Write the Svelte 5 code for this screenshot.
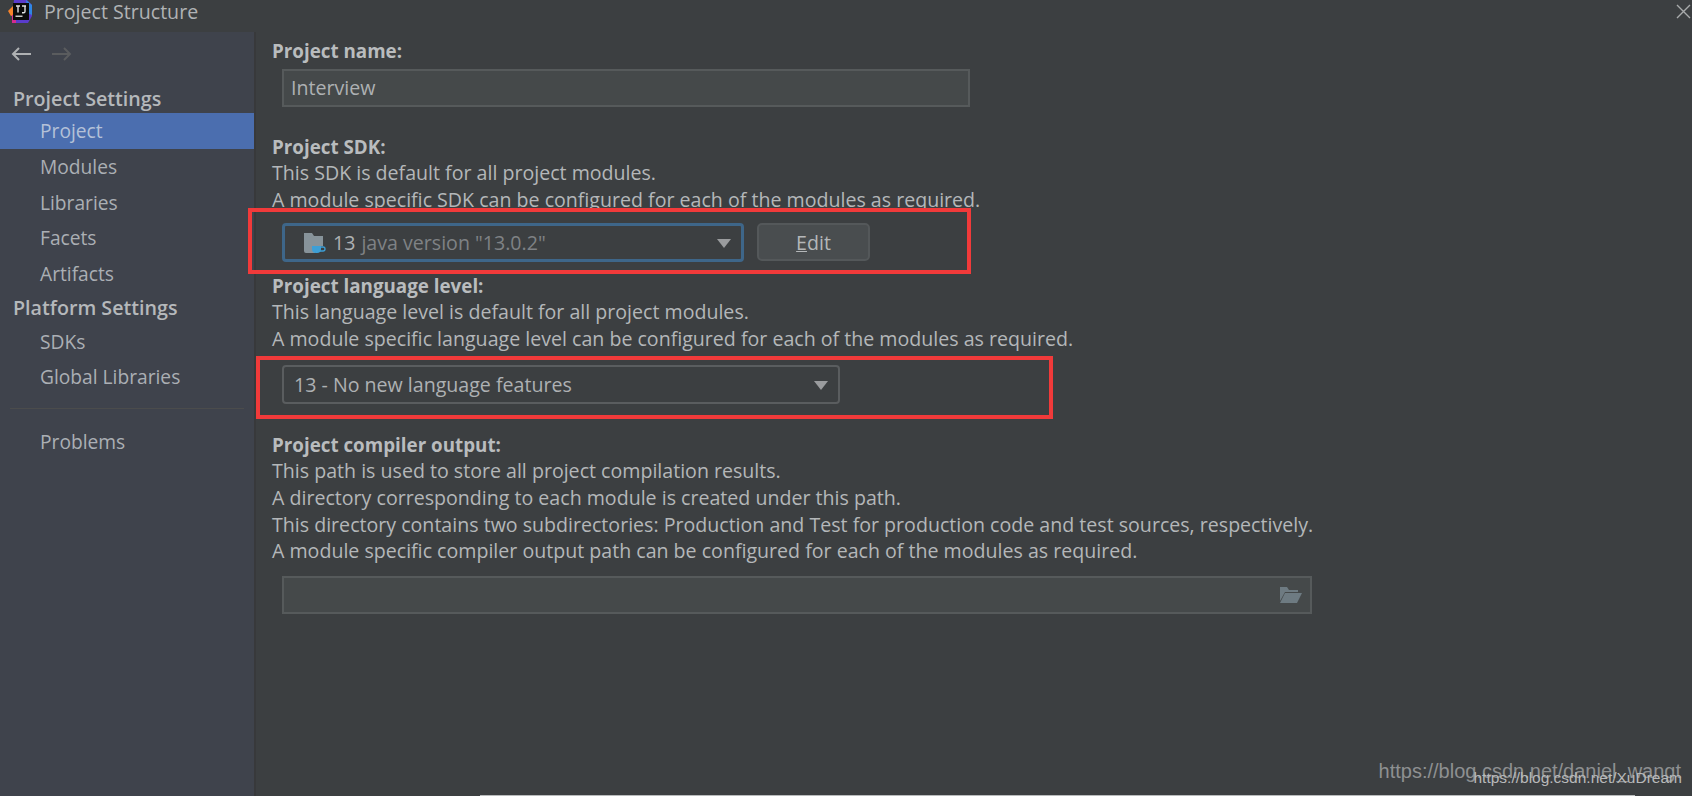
<script lang="ts">
  const nav = [
    { label: 'Project Settings', head: true },
    { label: 'Project', active: true },
    { label: 'Modules' },
    { label: 'Libraries' },
    { label: 'Facets' },
    { label: 'Artifacts' },
    { label: 'Platform Settings', head: true },
    { label: 'SDKs' },
    { label: 'Global Libraries' }
  ];
</script>

<div class="window">
  <header class="titlebar">
    <svg class="logo" width="26" height="24" viewBox="0 0 26 24">
      <path d="M7 0h13l5 5v11l-4 7H8l-3-6z" fill="#5a3ccb" />
      <path d="M1 11l5-5 2 9-4 1z" fill="#f7842b" />
      <path d="M5 15l4-1v9H5z" fill="#d42c8e" />
      <path d="M19 0l6 5v10l-4-2z" fill="#2f86e4" />
      <rect x="6" y="3" width="16" height="17" fill="#0b0b0b" />
      <rect x="8.5" y="15.5" width="7" height="1.5" fill="#c8c8c8" />
      <path d="M9 6h4M11 6v6.5M15 6h4M18 6v5.5q0 1.3-1.4 1.3H15" stroke="#e2e2e2" stroke-width="1.4" fill="none" />
    </svg>
    <span class="title">Project Structure</span>
    <svg class="close" width="15" height="15" viewBox="0 0 15 15">
      <path d="M1 1l13 13M14 1L1 14" stroke="#a9abac" stroke-width="1.4" />
    </svg>
  </header>

  <div class="body">
    <aside class="sidebar">
      <div class="history">
        <svg width="22" height="16" viewBox="0 0 22 16">
          <path d="M21 8H3M9 2L3 8l6 6" stroke="#afb1b3" stroke-width="2" fill="none" />
        </svg>
        <svg width="22" height="16" viewBox="0 0 22 16">
          <path d="M1 8h18M13 2l6 6-6 6" stroke="#5a5c5e" stroke-width="2" fill="none" />
        </svg>
      </div>
      <nav>
        {#each nav as item}
          <div class="nav-item" class:head={item.head} class:active={item.active}>{item.label}</div>
        {/each}
      </nav>
      <div class="divider"></div>
      <div class="nav-item">Problems</div>
    </aside>

    <main class="content">
      <section class="name-block">
        <h2>Project name:</h2>
        <div class="field name-field">Interview</div>
      </section>

      <section class="sdk-block">
        <h2>Project SDK:</h2>
        <p>This SDK is default for all project modules.</p>
        <p>A module specific SDK can be configured for each of the modules as required.</p>
        <div class="sdk-row">
          <div class="combo sdk-combo">
            <svg width="24" height="24" viewBox="0 0 24 24">
              <path d="M1 2h8l2 3h9v10H12v7H3q-2 0-2-2z" fill="#87939a" />
              <path d="M9 15h9v3q0 4-4 4h-1q-4 0-4-4z" fill="#3d9fd6" />
              <path d="M18 16h2q2 0 2 2t-2 2h-3" stroke="#3d9fd6" stroke-width="1.3" fill="none" />
            </svg>
            <span class="sdk-num">13</span>
            <span class="sdk-version">java version "13.0.2"</span>
            <span class="caret"></span>
          </div>
          <div class="edit"><u>E</u>dit</div>
        </div>
      </section>

      <section class="level-block">
        <h2>Project language level:</h2>
        <p>This language level is default for all project modules.</p>
        <p>A module specific language level can be configured for each of the modules as required.</p>
        <div class="combo level-combo">
          <span>13 - No new language features</span>
          <span class="caret"></span>
        </div>
      </section>

      <section class="output-block">
        <h2>Project compiler output:</h2>
        <p>This path is used to store all project compilation results.</p>
        <p>A directory corresponding to each module is created under this path.</p>
        <p>This directory contains two subdirectories: Production and Test for production code and test sources, respectively.</p>
        <p>A module specific compiler output path can be configured for each of the modules as required.</p>
        <div class="field output-field">
          <svg width="24" height="18" viewBox="0 0 24 18">
            <path d="M1 1h7l2 3h9v2H6L1 15z" fill="#6e7b82" />
            <path d="M6 7h17l-5 10H1z" fill="#6e7b82" />
          </svg>
        </div>
      </section>
    </main>
  </div>

  <div class="mark box-one"></div>
  <div class="mark box-two"></div>
  <div class="wm wm-back">https://blog.csdn.net/daniel_wangt</div>
  <div class="wm wm-front">https://blog.csdn.net/XuDream</div>
  <div class="edge"></div>
</div>

<style>
  :global(body) {
    margin: 0;
    background: #3c3f41;
  }

  .window {
    position: relative;
    width: 1692px;
    height: 796px;
    overflow: hidden;
    display: flex;
    flex-direction: column;
    background: #3c3f41;
    color: #b4b7b9;
    font-family: 'Open Sans', sans-serif;
    font-size: 19.6px;
    line-height: 26px;
  }

  .titlebar {
    flex: none;
    height: 32px;
    display: flex;
    align-items: center;
    padding: 0 1px 8px 7px;
    box-sizing: border-box;
    gap: 11px;
  }

  .title {
    color: #b0b3b5;
    font-size: 19.6px;
    line-height: 24px;
    flex: 1;
  }

  .close {
    margin-bottom: 2px;
  }

  .body {
    flex: 1;
    display: flex;
    min-height: 0;
  }

  .sidebar {
    flex: none;
    width: 254px;
    background: #3f434c;
    border-right: 2px solid #38393b;
    color: #abafb4;
    font-size: 19.2px;
  }

  .history {
    height: 50px;
    padding: 14px 0 0 10px;
    box-sizing: border-box;
    display: flex;
    gap: 19px;
  }

  .nav-item {
    height: 35.6px;
    line-height: 35.6px;
    padding-left: 40px;
  }

  .nav-item.head {
    height: 33px;
    line-height: 33px;
    padding-left: 13px;
    font-weight: 600;
    font-size: 19.7px;
    color: #b5b8bb;
  }

  .nav-item.head:first-child {
    height: 31px;
  }

  .nav-item.active {
    background: #4b6eaf;
    height: 36px;
    line-height: 36px;
    color: #b4c1d8;
  }

  nav .nav-item:last-child {
    height: 33.6px;
    line-height: 33.6px;
  }

  .divider {
    height: 1px;
    margin: 14px 10px 15px;
    background: #4b4c4c;
  }

  .content {
    flex: 1;
    padding-left: 16px;
  }

  h2 {
    margin: 0;
    font-size: 18.8px;
    font-weight: 700;
    color: #b9bcbe;
    line-height: 26px;
  }

  p {
    margin: 0;
    line-height: 26.6px;
  }

  .name-block {
    padding-top: 6px;
  }

  .field {
    margin: 5px 0 0 10px;
    height: 38px;
    box-sizing: border-box;
    border: 2px solid #565a5b;
    background: #45494a;
    display: flex;
    align-items: center;
    padding: 0 0 1px 7px;
    color: #aeb1b3;
  }

  .name-field {
    width: 688px;
  }

  .sdk-block {
    padding-top: 27px;
  }

  .sdk-row {
    margin: 10px 0 0 10px;
    display: flex;
    gap: 13px;
  }

  .combo {
    box-sizing: border-box;
    height: 39px;
    display: flex;
    align-items: center;
    position: relative;
  }

  .sdk-combo {
    width: 462px;
    border: 3px solid #3e6689;
    border-radius: 4px;
    padding-left: 18px;
    background: #3c3f41;
  }

  .sdk-num {
    margin-left: 6px;
    color: #aeb1b3;
  }

  .sdk-version {
    margin-left: 6px;
    color: #7f8285;
  }

  .caret {
    position: absolute;
    right: 10px;
    top: 50%;
    margin-top: -4px;
    width: 0;
    height: 0;
    border-left: 7.5px solid transparent;
    border-right: 7.5px solid transparent;
    border-top: 9px solid #9a9c9e;
  }

  .edit {
    width: 113px;
    height: 38px;
    box-sizing: border-box;
    border: 2px solid #54585a;
    border-radius: 5px;
    background: #494d4f;
    color: #b4b7b9;
    text-align: center;
    line-height: 36px;
  }

  .level-block {
    padding-top: 11px;
  }

  .level-combo {
    margin: 13px 0 0 10px;
    width: 558px;
    border: 2px solid #5a5d5f;
    border-radius: 4px;
    padding-left: 10px;
    color: #aeb1b3;
  }

  .output-block {
    padding-top: 28px;
  }

  .output-field {
    width: 1030px;
    margin-top: 11px;
    justify-content: flex-end;
    padding: 0 7px 0 0;
  }

  .mark {
    position: absolute;
    box-sizing: border-box;
    border: 4px solid #f13a3a;
    pointer-events: none;
  }

  .box-one {
    left: 248px;
    top: 208px;
    width: 723px;
    height: 66px;
  }

  .box-two {
    left: 256px;
    top: 356px;
    width: 797px;
    height: 63px;
  }

  .wm {
    position: absolute;
    font-family: 'Liberation Sans', sans-serif;
    white-space: nowrap;
  }

  .wm-back {
    right: 11px;
    top: 758px;
    font-size: 20px;
    line-height: 26px;
    color: #8e9091;
  }

  .wm-front {
    right: 10px;
    top: 768px;
    font-size: 15.5px;
    line-height: 20px;
    color: #b8b9ba;
  }

  .edge {
    position: absolute;
    left: 480px;
    right: 57px;
    bottom: 0;
    height: 1px;
    background: #b9bbbc;
  }
</style>
